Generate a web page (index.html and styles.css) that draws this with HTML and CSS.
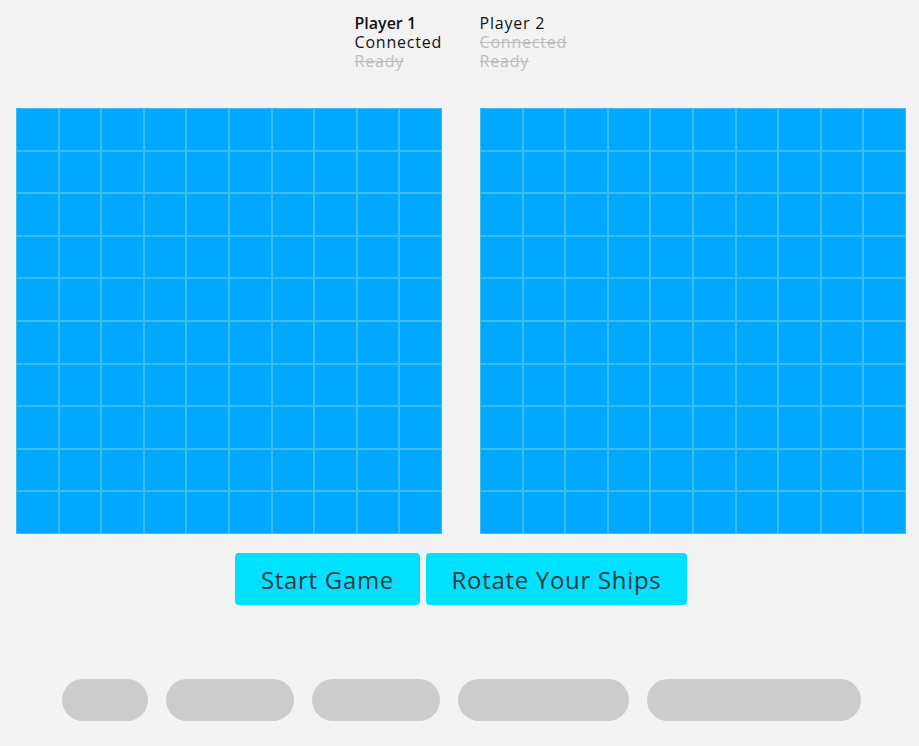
FILE: index.html
```html
<!DOCTYPE html>
<html>
<head>
<meta charset="utf-8">
<link rel="stylesheet" href="styles.css">
</head>
<body>
<div class="players">
  <div class="player">
    <div class="name bold">Player 1</div>
    <div>Connected</div>
    <div class="off">Ready</div>
  </div>
  <div class="player">
    <div class="name">Player 2</div>
    <div class="off">Connected</div>
    <div class="off">Ready</div>
  </div>
</div>
<div class="boards">
  <div class="board" id="b1"></div>
  <div class="board" id="b2"></div>
</div>
<div class="actions">
  <button class="btn start">Start Game</button>
  <button class="btn rotate">Rotate Your Ships</button>
</div>
<div class="ships">
  <div class="ship s2"></div>
  <div class="ship s3"></div>
  <div class="ship s3"></div>
  <div class="ship s4"></div>
  <div class="ship s5"></div>
</div>
<script>
document.querySelectorAll('.board').forEach(function(b){
  for (var i = 0; i < 100; i++) {
    var c = document.createElement('div');
    c.className = 'cell';
    b.appendChild(c);
  }
});
</script>
</body>
</html>
```
FILE: styles.css
```css
html, body {
  margin: 0;
  padding: 0;
  background: #f3f3f3;
  font-family: "Open Sans", "DejaVu Sans", sans-serif;
}
.players {
  display: flex;
  justify-content: center;
  gap: 38px;
  padding-top: 14px;
  padding-left: 2px;
  font-size: 16px;
  line-height: 19px;
  letter-spacing: 0.8px;
  color: #111;
}
.player {
  width: 87px;
  white-space: nowrap;
}
.bold {
  font-weight: 600;
  letter-spacing: 0;
}
.off {
  color: #bdbdbd;
  text-decoration: line-through;
}
.boards {
  display: flex;
  gap: 38px;
  padding-left: 16px;
  margin-top: 37px;
}
.board {
  width: 426px;
  height: 426px;
  display: grid;
  grid-template-columns: repeat(10, 1fr);
  grid-template-rows: repeat(10, 1fr);
}
.cell {
  background: #00a8ff;
  border: 1px solid #3bbdf2;
}
.actions {
  display: flex;
  justify-content: center;
  gap: 6px;
  margin-top: 19px;
  padding-left: 3px;
}
.btn {
  height: 52px;
  border: none;
  border-radius: 4px;
  background: #00e0ff;
  color: #2f3a3d;
  font-family: "Open Sans", "DejaVu Sans", sans-serif;
  font-size: 24px;
  font-weight: 400;
  padding: 0;
  letter-spacing: 0.7px;
}
.start {
  width: 185px;
}
.rotate {
  width: 261px;
}
.ships {
  display: flex;
  justify-content: center;
  gap: 18px;
  margin-top: 74px;
  padding-left: 3px;
}
.ship {
  height: 42px;
  border-radius: 21px;
  background: #cccccc;
}
.s2 { width: 86px; }
.s3 { width: 128px; }
.s4 { width: 171px; }
.s5 { width: 214px; }
```
